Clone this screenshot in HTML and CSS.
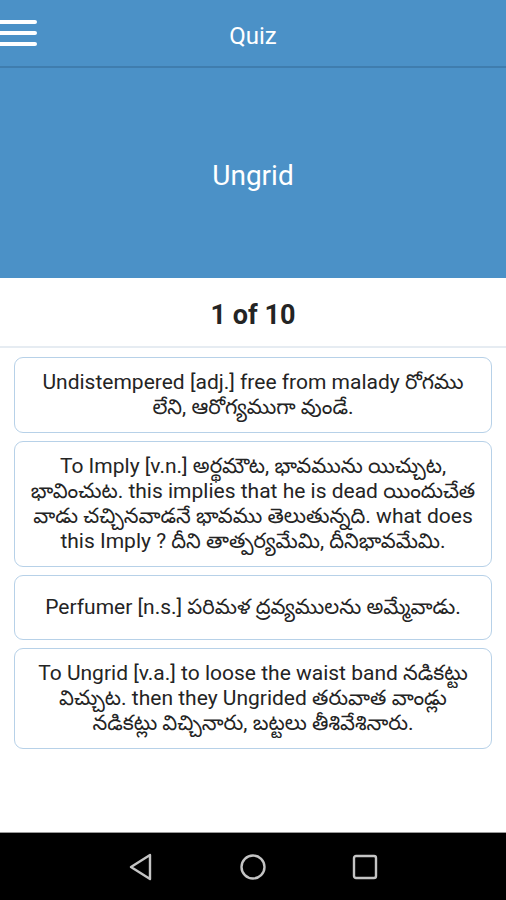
FILE: index.html
```html
<!DOCTYPE html>
<html lang="te">
<head>
    <meta charset="UTF-8">
    <meta name="viewport" content="width=device-width, initial-scale=1.0">
    <title>Quiz</title>
    <link rel="stylesheet" href="styles.css">
</head>
<body>
    <div class="screen">
        <header class="app-bar">
            <button class="menu-btn" aria-label="Menu">
                <span></span><span></span><span></span>
            </button>
            <h1 class="app-title">Quiz</h1>
            <div></div>
        </header>

        <section class="word-banner">
            <h2>Ungrid</h2>
        </section>

        <div class="counter">1 of 10</div>

        <main class="options">
            <div class="option">Undistempered [adj.] free from malady రోగము లేని, ఆరోగ్యముగా వుండే.</div>
            <div class="option">To Imply [v.n.] అర్థమౌట, భావమును యిచ్చుట, భావించుట. this implies that he is dead యిందుచేత వాడు చచ్చినవాడనే భావము తెలుతున్నది. what does this Imply ? దీని తాత్పర్యమేమి, దీనిభావమేమి.</div>
            <div class="option">Perfumer [n.s.] పరిమళ ద్రవ్యములను అమ్మేవాడు.</div>
            <div class="option">To Ungrid [v.a.] to loose the waist band నడికట్టు విచ్చుట. then they Ungrided తరువాత వాండ్లు నడికట్లు విచ్చినారు, బట్టలు తీశివేశినారు.</div>
        </main>

        <!-- android soft keys -->
        <nav class="nav-bar">
            <div class="nav-key">
                <svg width="26" height="28" viewBox="0 0 26 28"><path d="M22 2 L3 14 L22 26 Z" fill="none" stroke="#c4c4c4" stroke-width="2.4" stroke-linejoin="round"/></svg>
            </div>
            <div class="nav-key">
                <svg width="28" height="28" viewBox="0 0 28 28"><circle cx="14" cy="14" r="11.5" fill="none" stroke="#c4c4c4" stroke-width="2.4"/></svg>
            </div>
            <div class="nav-key">
                <svg width="28" height="28" viewBox="0 0 28 28"><rect x="3" y="3" width="22" height="22" rx="2" fill="none" stroke="#c4c4c4" stroke-width="2.4"/></svg>
            </div>
        </nav>
    </div>
</body>
</html>
```

FILE: styles.css
```css
* {
    box-sizing: border-box;
}
body {
    margin: 0;
    font-family: Roboto, "Noto Sans", "Noto Sans Telugu", sans-serif;
    background-color: #fff;
    color: #242424;
}
.screen {
    display: flex;
    flex-direction: column;
    height: 900px;
}
.app-bar {
    height: 68px;
    background-color: #4b91c7;
    border-bottom: 2px solid #3f7dae;
    display: grid;
    grid-template-columns: 1fr auto 1fr;
    align-items: center;
}
.menu-btn {
    border: none;
    background: none;
    padding: 0;
    width: 37px;
    display: flex;
    flex-direction: column;
    gap: 7px;
    margin-top: -1px;
}
.menu-btn span {
    display: block;
    height: 4px;
    background-color: #fff;
    border-radius: 0 2px 2px 0;
}
.app-title {
    margin: 5px 0 0;
    font-size: 24px;
    font-weight: 400;
    color: #fff;
}
.word-banner {
    height: 210px;
    background-color: #4b91c7;
    display: flex;
    align-items: center;
    justify-content: center;
}
.word-banner h2 {
    margin: 5px 0 0;
    font-size: 28px;
    font-weight: 400;
    color: #fff;
}
.counter {
    height: 70px;
    display: flex;
    align-items: center;
    justify-content: center;
    font-size: 27px;
    font-weight: 700;
    padding-top: 5px;
    border-bottom: 2px solid #e6ecf2;
}
.options {
    flex: 1;
    padding: 9px 14px;
    display: flex;
    flex-direction: column;
    gap: 8px;
}
.option {
    min-height: 65px;
    border: 1px solid #b7d1e8;
    border-radius: 9px;
    padding: 12px 14px;
    font-size: 21px;
    line-height: 25px;
    text-align: center;
    display: flex;
    align-items: center;
    justify-content: center;
}
.nav-bar {
    height: 68px;
    background-color: #000;
    border-top: 1px solid #9a9a9a;
    display: flex;
    justify-content: center;
    align-items: center;
}
.nav-key {
    width: 112px;
    display: flex;
    justify-content: center;
}
```
